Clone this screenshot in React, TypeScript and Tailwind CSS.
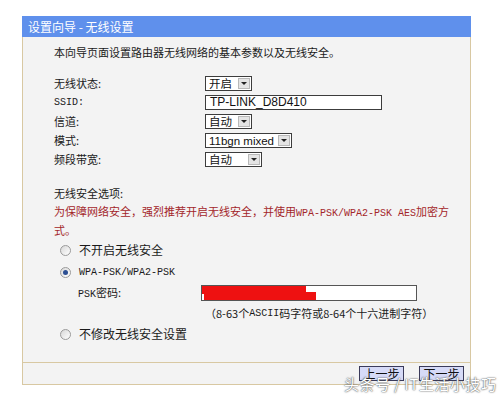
import React from "react";

const cjk = "font-['SimSun','Noto_Sans_CJK_SC',sans-serif]";
const mono = "font-['Liberation_Mono','Noto_Sans_CJK_SC',monospace]";
const ctrl = "font-['Liberation_Sans','Noto_Sans_CJK_SC',sans-serif]";

const Select = ({ value, width }: { value: string; width: string }) => (
  <div className={`flex items-center h-[15px] border border-[#3c3c3c] bg-white ${width}`}>
    <span className={`flex-1 min-w-0 pl-[3px] text-[11.5px] leading-[14px] text-[#111] whitespace-nowrap ${ctrl}`}>{value}</span>
    <span className="shrink-0 flex items-center justify-center w-[12px] h-[11px] mr-[1px] bg-[#e4e4e4] border border-[#b8b8b8]">
      <span className="w-0 h-0 border-l-[3px] border-r-[3px] border-t-[3px] border-l-transparent border-r-transparent border-t-[#222]" />
    </span>
  </div>
);

const Radio = ({ checked }: { checked?: boolean }) => (
  <span className="flex items-center justify-center w-[11px] h-[11px] rounded-full border border-[#9a9a9a] bg-gradient-to-br from-[#d8d8d8] to-white">
    {checked && <span className="w-[5px] h-[5px] rounded-full bg-[#2c4f93]" />}
  </span>
);

const rows = [
  { label: "无线状态:", control: <Select value="开启" width="w-[47px]" /> },
  {
    label: "SSID:",
    mono: true,
    control: (
      <div className={`flex items-center h-[15px] w-[177px] border border-[#3c3c3c] bg-white pl-[4px] text-[12px] leading-[15px] text-[#111] ${ctrl}`}>
        TP-LINK_D8D410
      </div>
    ),
  },
  { label: "信道:", control: <Select value="自动" width="w-[47px]" /> },
  { label: "模式:", control: <Select value="11bgn mixed" width="w-[87px]" /> },
  { label: "频段带宽:", control: <Select value="自动" width="w-[57px]" /> },
];

export default function App() {
  return (
    <div className={`relative w-[500px] h-[398px] bg-white pt-[16px] pl-[22px] ${cjk}`}>
      <div className="w-[449px] flex flex-col">
        {/* title bar */}
        <div className="h-[21px] bg-[#5f90ec] pl-[6px] flex items-center text-[12px] text-white">
          设置向导 - 无线设置
        </div>

        {/* body */}
        <div className="border-x border-[#d8c8a2] bg-[#f3f3f3] pl-[31px] h-[325px] flex flex-col text-[11px] text-[#1a1a1a]">
          <p className="mt-[8px] leading-[15px]">本向导页面设置路由器无线网络的基本参数以及无线安全。</p>

          <div className="mt-[14px] flex flex-col">
            {rows.map((r) => (
              <div key={r.label} className="flex items-center h-[19px]">
                <span className={`w-[151px] ${r.mono ? mono + " text-[10px]" : ""}`}>{r.label}</span>
                {r.control}
              </div>
            ))}
          </div>

          <p className="mt-[17px] leading-[15px]">无线安全选项:</p>
          <p className="mt-[2px] leading-[17px] text-[#a3262a]">
            为保障网络安全，强烈推荐开启无线安全，并使用
            <span className={`${mono} text-[10px]`}>WPA-PSK/WPA2-PSK AES</span>加密方
            <br />
            式。
          </p>

          <div className="flex items-center h-[22px] pl-[6px] gap-[8px] text-[12px]">
            <Radio />
            <span>不开启无线安全</span>
          </div>
          <div className="flex items-center h-[22px] pl-[6px] gap-[8px]">
            <Radio checked />
            <span className={`${mono} text-[10px]`}>WPA-PSK/WPA2-PSK</span>
          </div>
          <div className="flex items-center h-[20px] pl-[24px]">
            <span className="w-[123px]">
              <span className={`${mono} text-[10px]`}>PSK</span>密码:
            </span>
            <div className="relative h-[16px] w-[216px] border border-[#555] bg-white">
              <div className="absolute left-0 top-0 h-[8px] w-[104px] bg-[#ee1111]" />
              <div className="absolute left-[2px] top-[6px] h-[8px] w-[112px] bg-[#ee1111]" />
            </div>
          </div>
          <div className="flex items-center h-[21px] pl-[151px] text-[11px]">
            （8-63个<span className={`${mono} text-[10px]`}>ASCII</span>码字符或8-64个十六进制字符）
          </div>
          <div className="flex items-center h-[20px] pl-[6px] gap-[8px] text-[12px]">
            <Radio />
            <span>不修改无线安全设置</span>
          </div>
        </div>

        {/* footer */}
        <div className="h-[23px] border border-[#d8c8a2] bg-[#f3f3f3] flex items-center justify-end gap-[15px] pr-[6px]">
          <button className="w-[45px] h-[15px] bg-[#d6daf7] border border-[#3a3a5a] text-[12px] leading-[13px] text-[#111]">上一步</button>
          <button className="w-[45px] h-[15px] bg-[#d6daf7] border border-[#3a3a5a] text-[12px] leading-[13px] text-[#111]">下一步</button>
        </div>
      </div>

      {/* watermark */}
      <div className="absolute left-[344px] top-[373px] text-[15px] text-white tracking-[0.5px] [text-shadow:0_0_2px_#555,0_0_1px_#555]">
        头条号 / IT生活小技巧
      </div>
    </div>
  );
}
